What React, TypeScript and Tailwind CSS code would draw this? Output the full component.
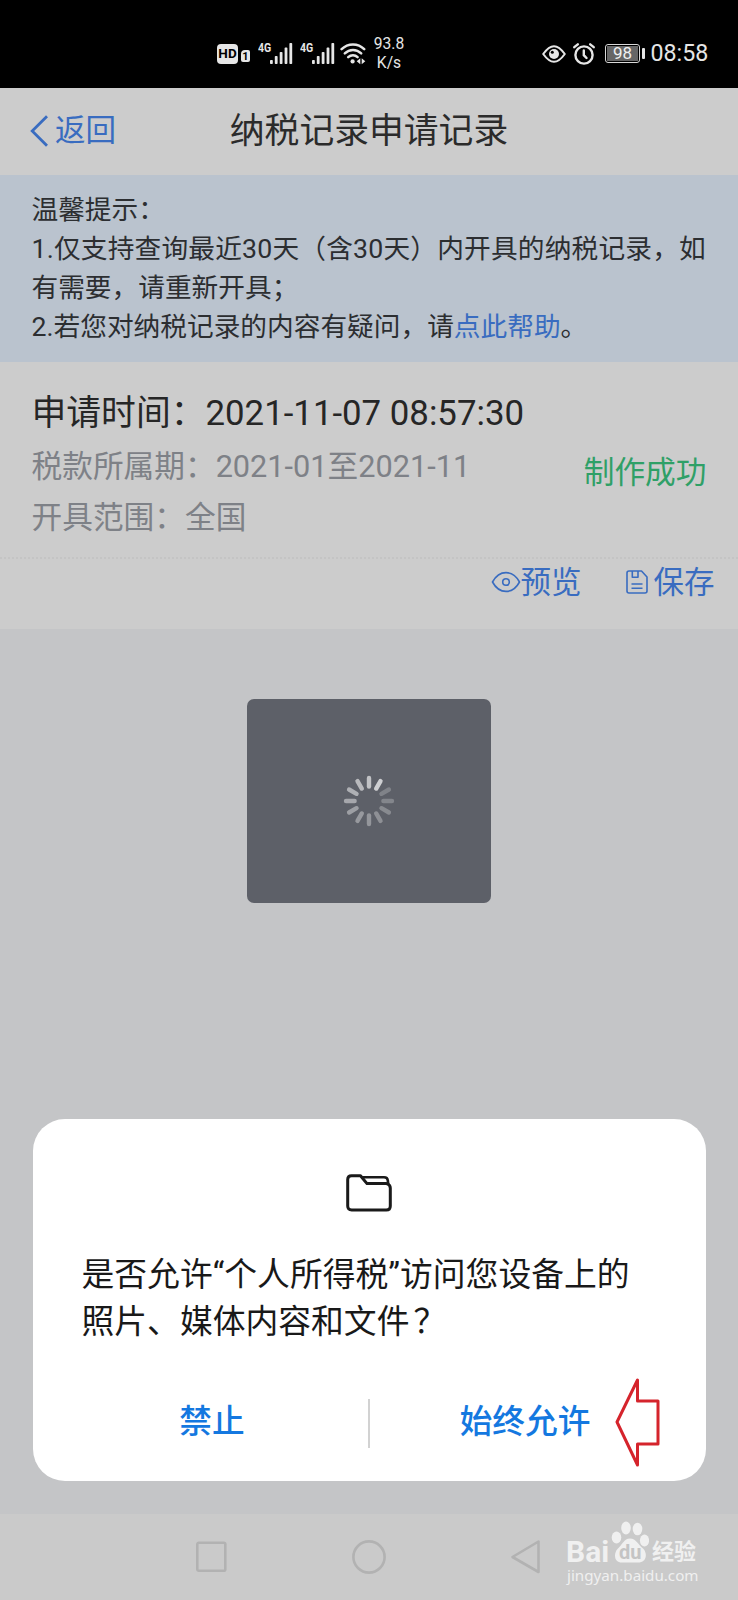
import React from "react";

function SignalBars() {
  return (
    <svg className="h-[22px] w-[24px] shrink-0" viewBox="0 0 24 22" fill="#e6e6e6">
      <rect x="0" y="17" width="2.8" height="4" rx="0.8" />
      <rect x="4.8" y="13" width="2.8" height="8" rx="0.8" />
      <rect x="9.7" y="9" width="2.8" height="12" rx="0.8" />
      <rect x="14.6" y="4.6" width="2.8" height="16.4" rx="0.8" />
      <rect x="19.4" y="0" width="2.8" height="21" rx="0.8" />
    </svg>
  );
}

function MobileSignal() {
  return (
    <div className="flex w-[42px] shrink-0 items-start">
      <span className="w-[11.500px] origin-left scale-x-[0.84] text-[12.500px] leading-[10px] font-bold">4G</span>
      <SignalBars />
    </div>
  );
}

function StatusBar() {
  return (
    <div className="flex h-[88px] shrink-0 items-center bg-black pt-[19px] pl-[217px] text-[#e6e6e6]">
      <div className="flex h-[20px] w-[21px] shrink-0 items-center justify-center rounded-[4px] bg-[#e6e6e6]">
        <span className="text-[13.500px] leading-none font-bold text-black">HD</span>
      </div>
      <div className="mt-[5px] ml-[3px] flex h-[12px] w-[9px] shrink-0 items-center justify-center rounded-[2px] rounded-tl-[4px] bg-[#e6e6e6]">
        <span className="text-[11px] leading-none font-bold text-black">1</span>
      </div>
      <div className="ml-[8px] flex">
        <MobileSignal />
        <MobileSignal />
      </div>
      <svg className="-ml-[2px] h-[22px] w-[26px] shrink-0" viewBox="0 0 26 22" fill="none" stroke="#e6e6e6" strokeWidth="2.500" strokeLinecap="round">
        <path d="M1.600 6.200C8-0.200 18-0.200 24.200 6.200" />
        <path d="M4.800 10.400C9.500 5.800 16.500 5.800 21.200 10.400" />
        <path d="M8.200 14.200C11 11.500 15 11.500 17.600 14.200" />
        <circle cx="12.600" cy="18.400" r="2.100" fill="#e6e6e6" stroke="none" />
        <path d="M20.300 15.200v6l-3.600-3zM21.700 15.200v6l3.600-3z" fill="#e6e6e6" stroke="none" />
      </svg>
      <div className="ml-[7px] w-[32px] shrink-0 text-center text-[15.600px] leading-[18.500px]">
        <div>93.8</div>
        <div>K/s</div>
      </div>
      <svg className="ml-[137px] h-[20px] w-[24px] shrink-0" viewBox="0 0 24 20" fill="none" stroke="#e6e6e6" strokeWidth="2">
        <path d="M1.200 10C5.500 4 9 2.200 12 2.200S18.500 4 22.800 10C18.500 16 15 17.800 12 17.800S5.500 16 1.200 10Z" strokeLinejoin="round" />
        <circle cx="12" cy="10" r="5" fill="#e6e6e6" stroke="none" />
        <circle cx="10.300" cy="8.200" r="1.500" fill="#000" stroke="none" />
      </svg>
      <svg className="ml-[7px] h-[22px] w-[22px] shrink-0" viewBox="0 0 22 22" fill="none" stroke="#e6e6e6" strokeWidth="2.400" strokeLinecap="round">
        <circle cx="11" cy="12" r="8.600" />
        <path d="M1.300 4.200L4.800 1.300M20.700 4.200L17.200 1.300M10.800 7.500V12.200L13.500 15" />
      </svg>
      <div className="ml-[10px] flex h-[19px] w-[35px] shrink-0 rounded-[3px] border border-[#d8d8d8] p-[1px]">
        <div className="flex flex-1 items-center justify-center bg-[#666666]">
          <span className="text-[17px] leading-none text-[#f0f0f0]">98</span>
        </div>
      </div>
      <div className="ml-[2px] h-[11px] w-[2.500px] shrink-0 rounded-[1px] bg-[#e6e6e6]" />
      <span className="mt-[1px] ml-[6px] text-[23.200px] leading-none">08:58</span>
    </div>
  );
}

function Header() {
  return (
    <div className="grid h-[87px] shrink-0 grid-cols-[1fr_auto_1fr] items-center bg-[#cccccc] pb-[1px]">
      <div className="flex items-center pl-[29.500px] text-[#396cc0]">
        <svg className="h-[32px] w-[19px]" viewBox="0 0 19 32" fill="none" stroke="currentColor" strokeWidth="2.800">
          <path d="M17 1.200L2.200 16L17 30.800" />
        </svg>
        <span className="ml-[6.500px] text-[30.500px] leading-[40px]">返回</span>
      </div>
      <h1 className="text-[34.800px] leading-[44px] text-[#2b2b2b]">纳税记录申请记录</h1>
      <div />
    </div>
  );
}

function Tips() {
  return (
    <div className="h-[187px] shrink-0 bg-[#bac3ce] pt-[16px] pl-[31.500px] text-[26.700px] leading-[39px] whitespace-nowrap text-[#2c2e31]">
      <p>温馨提示：</p>
      <p className="tracking-[0.190px]">1.仅支持查询最近30天（含30天）内开具的纳税记录，如</p>
      <p>有需要，请重新开具；</p>
      <p>
        2.若您对纳税记录的内容有疑问，请<span className="text-[#396cc0]">点此帮助</span>。
      </p>
    </div>
  );
}

function RecordCard() {
  return (
    <div className="h-[267px] shrink-0 bg-[#cccccc] whitespace-nowrap">
      <div className="flex h-[197px] border-b-2 border-dotted border-[#c4c4c4] pl-[31.500px]">
        <div className="flex-1 pt-[26px]">
          <p className="text-[34.800px] leading-[50px] text-[#262626]">申请时间：2021-11-07 08:57:30</p>
          <p className="mt-[4px] text-[30.700px] leading-[50px] text-[#7e8187]">税款所属期：2021-01至2021-11</p>
          <p className="mt-[1px] text-[30.700px] leading-[50px] text-[#7e8187]">开具范围：全国</p>
        </div>
        <div className="pt-[91px] pr-[31.500px] text-[30.700px] leading-[40px] text-[#2fa067]">制作成功</div>
      </div>
      <div className="flex justify-end pt-[2px] pr-[23.500px] text-[30.500px] leading-[44px] text-[#396cc0]">
        <div className="flex items-center">
          <svg className="-mt-[3px] h-[22px] w-[30px]" viewBox="0 0 30 22" fill="none" stroke="currentColor" strokeWidth="1.600">
            <path d="M1.500 11C5 4.500 10 1.600 15 1.600S25 4.500 28.500 11C25 17.500 20 20.400 15 20.400S5 17.500 1.500 11Z" />
            <circle cx="15" cy="11" r="3.300" />
          </svg>
          <span>预览</span>
        </div>
        <div className="ml-[44px] flex items-center">
          <svg className="-mt-[3px] h-[24px] w-[22px]" viewBox="0 0 22 24" fill="none" stroke="currentColor" strokeWidth="1.600" strokeLinejoin="round">
            <path d="M3 1H15.500L21 7V21a2 2 0 0 1-2 2H3a2 2 0 0 1-2-2V3a2 2 0 0 1 2-2ZM6.300 1V7.200H12V1M5.500 14H16.500M5.500 18.200H16.500" />
          </svg>
          <span className="ml-[6px]">保存</span>
        </div>
      </div>
    </div>
  );
}

const spokes = [0.62, 0.7, 0.22, 0.24, 0.27, 0.3, 0.34, 0.36, 0.4, 0.45, 0.5, 0.56];

function Loading() {
  return (
    <div className="mx-auto mt-[70px] flex h-[204px] w-[244.500px] shrink-0 items-center justify-center rounded-[7px] bg-[#5d6068]">
      <svg className="h-[52px] w-[52px]" viewBox="-26 -26 52 52">
        {spokes.map((opacity, i) => (
          <rect key={i} x="-2.200" y="-25.200" width="4.400" height="13" rx="2.200" fill="#fff" opacity={opacity} transform={`rotate(${i * 30})`} />
        ))}
      </svg>
    </div>
  );
}

function PermissionDialog() {
  return (
    <div className="relative mt-[216px] ml-[32.500px] h-[362px] w-[673px] shrink-0 rounded-[32px] bg-white">
      <svg className="mx-auto mt-[54.500px] block h-[38px] w-[46px]" viewBox="0 0 46 38" fill="none" stroke="#1a1a1a" strokeWidth="3" strokeLinejoin="round">
        <path d="M5.500 1.700H14.500L21 9.600H40.500Q44.300 10.500 44.300 14V32Q44.300 36 40.300 36H5.700Q1.700 36 1.700 32V5.500Q1.700 1.700 5.500 1.700Z" />
        <path d="M15.500 3.300H38Q41.500 3.300 41.800 6.500L42.300 10.500" strokeWidth="2.600" />
      </svg>
      <p className="mt-[40.500px] pl-[49px] text-[32.800px] leading-[47px] whitespace-nowrap text-[#191919]">
        是否允许“个人所得税”访问您设备上的
        <br />
        照片、媒体内容和文件<span className="pl-[4px]">？</span>
      </p>
      <div className="mt-[53px] flex h-[49px] items-center text-[32.700px] leading-[48px] font-medium text-[#1478e0]">
        <button className="flex-1 pb-[3px] pl-[24px]">禁止</button>
        <div className="h-[49px] w-[2px] bg-[#d2d2d2]" />
        <button className="flex-1 pr-[25px] pb-[3px]">始终允许</button>
      </div>
      <svg className="absolute top-[259px] left-[582px] h-[90px] w-[46px]" viewBox="0 0 46 90" fill="none" stroke="#d5242c" strokeWidth="3" strokeLinejoin="round">
        <path d="M22.500 2V23H43V66H22.500V87L2 44Z" />
      </svg>
    </div>
  );
}

function Watermark() {
  return (
    <div className="absolute top-[7px] left-[566px] w-[134px] text-[#f0f0f0]">
      <div className="flex h-[42px] items-end leading-none">
        <span className="mb-[-1px] w-[45px] text-[30px] leading-[24px] font-bold">Bai</span>
        <div className="relative h-[42px] w-[38px]">
          <svg className="h-[42px] w-[38px]" viewBox="0 0 38 42" fill="#f0f0f0">
            <ellipse cx="5.500" cy="16.500" rx="4.800" ry="6" />
            <ellipse cx="15" cy="7" rx="4.800" ry="6.500" />
            <ellipse cx="26.500" cy="8" rx="4.800" ry="6.300" />
            <ellipse cx="33.500" cy="19.500" rx="4.600" ry="6" />
            <path d="M19 17.500C13 17.500 11 24 7 27.500C3 31 2 41.500 11 41.500H27C37 41.500 36 31 32 27.500C27.500 24 25 17.500 19 17.500Z" />
          </svg>
          <span className="absolute top-[20px] left-[8px] text-[20px] leading-[22px] font-bold text-[#c4c4c4]">du</span>
        </div>
        <span className="ml-[3px] text-[22px] leading-[23px] font-bold">经验</span>
      </div>
      <div className="mt-[2px] pl-[1px] font-['Noto_Sans'] text-[15.200px] leading-[20px]">jingyan.baidu.com</div>
    </div>
  );
}

function NavigationBar() {
  return (
    <div className="relative mt-auto flex h-[86px] shrink-0 items-center bg-[#cacaca] pl-[195px]">
      <svg className="h-[34px] w-[32px]" viewBox="0 0 32 34" fill="none" stroke="#b2b2b2" strokeWidth="2.600">
        <rect x="2.300" y="2.800" width="28" height="28" rx="1.500" />
      </svg>
      <svg className="ml-[124px] h-[36px] w-[36px]" viewBox="0 0 36 36" fill="none" stroke="#b2b2b2" strokeWidth="2.600">
        <circle cx="18" cy="18" r="15.600" />
      </svg>
      <svg className="ml-[123px] h-[36px] w-[32px]" viewBox="0 0 32 36" fill="none" stroke="#b2b2b2" strokeWidth="2.600" strokeLinejoin="round">
        <path d="M28.500 2.500V33L2.500 18Z" />
      </svg>
      <Watermark />
    </div>
  );
}

export default function App() {
  return (
    <div className="flex h-[1600px] w-[738px] flex-col overflow-hidden bg-[#c4c5c7] font-[Roboto,'Noto_Sans_CJK_SC',sans-serif]">
      <StatusBar />
      <Header />
      <Tips />
      <RecordCard />
      <Loading />
      <PermissionDialog />
      <NavigationBar />
    </div>
  );
}
